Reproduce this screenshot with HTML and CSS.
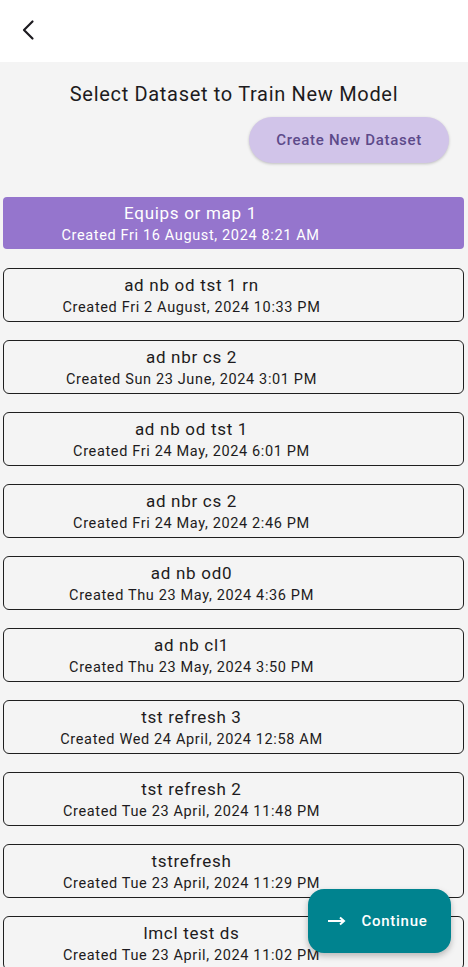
FILE: index.html
```html
<!DOCTYPE html>
<html>
<head>
<meta charset="utf-8">
<link rel="stylesheet" href="styles.css">
</head>
<body>
<header class="appbar">
  <button class="back" aria-label="Back">
    <svg width="24" height="24" viewBox="0 0 24 24"><path d="M16.5 3.5 L8 12 L16.5 20.5" fill="none" stroke="#1d1b20" stroke-width="2.2" stroke-linecap="round" stroke-linejoin="round"/></svg>
  </button>
</header>
<main class="content">
  <h1 class="title">Select Dataset to Train New Model</h1>
  <div class="actions"><button class="create">Create New Dataset</button></div>
  <ul class="list">
    <li class="card selected"><div class="card-body"><div class="name">Equips or map 1</div><div class="date">Created Fri 16 August, 2024 8:21 AM</div></div></li>
    <li class="card"><div class="card-body"><div class="name">ad nb od tst 1 rn</div><div class="date">Created Fri 2 August, 2024 10:33 PM</div></div></li>
    <li class="card"><div class="card-body"><div class="name">ad nbr cs 2</div><div class="date">Created Sun 23 June, 2024 3:01 PM</div></div></li>
    <li class="card"><div class="card-body"><div class="name">ad nb od tst 1</div><div class="date">Created Fri 24 May, 2024 6:01 PM</div></div></li>
    <li class="card"><div class="card-body"><div class="name">ad nbr cs 2</div><div class="date">Created Fri 24 May, 2024 2:46 PM</div></div></li>
    <li class="card"><div class="card-body"><div class="name">ad nb od0</div><div class="date">Created Thu 23 May, 2024 4:36 PM</div></div></li>
    <li class="card"><div class="card-body"><div class="name">ad nb cl1</div><div class="date">Created Thu 23 May, 2024 3:50 PM</div></div></li>
    <li class="card"><div class="card-body"><div class="name">tst refresh 3</div><div class="date">Created Wed 24 April, 2024 12:58 AM</div></div></li>
    <li class="card"><div class="card-body"><div class="name">tst refresh 2</div><div class="date">Created Tue 23 April, 2024 11:48 PM</div></div></li>
    <li class="card"><div class="card-body"><div class="name">tstrefresh</div><div class="date">Created Tue 23 April, 2024 11:29 PM</div></div></li>
    <li class="card"><div class="card-body"><div class="name">lmcl test ds</div><div class="date">Created Tue 23 April, 2024 11:02 PM</div></div></li>
  </ul>
</main>
<button class="fab">
  <svg width="20" height="20" viewBox="0 0 20 20"><path d="M1 10 H17 M13 6.5 L17 10 L13 13.5" fill="none" stroke="#fff" stroke-width="2"/></svg>
  <span>Continue</span>
</button>
</body>
</html>
```
FILE: styles.css
```css
* { box-sizing: border-box; }
html, body { margin: 0; padding: 0; }
body {
  width: 468px;
  height: 967px;
  overflow: hidden;
  background: #f4f4f4;
  font-family: Roboto, "Noto Sans", sans-serif;
  color: #1d1b20;
  position: relative;
}
.appbar {
  height: 62px;
  background: #ffffff;
  display: flex;
  align-items: center;
  padding-left: 16px;
}
.back {
  border: 0;
  background: none;
  padding: 0;
  width: 24px;
  height: 24px;
  display: flex;
  margin-top: -2px;
}
.content {
  padding: 19px 0 0;
}
.title {
  margin: 0;
  font-size: 20px;
  font-weight: 400;
  line-height: 26px;
  letter-spacing: 0.68px;
  text-align: center;
  color: #1d1b20;
}
.actions {
  display: flex;
  justify-content: flex-end;
  padding: 10px 19px 0 0;
}
.create {
  width: 200px;
  height: 46px;
  border: 0;
  border-radius: 23px;
  background: #d1c4e9;
  color: #5d4a8a;
  font-family: Roboto, sans-serif;
  font-size: 15px;
  font-weight: 500;
  letter-spacing: 0.7px;
  box-shadow: 0 1px 3px rgba(0,0,0,0.22);
}
.list {
  list-style: none;
  margin: 0;
  padding: 34px 4px 0 3px;
  display: flex;
  flex-direction: column;
  gap: 18px;
}
.card {
  flex: none;
  height: 54px;
  border: 1.3px solid #1f1f1f;
  border-radius: 6px;
  display: flex;
  align-items: center;
}
.card.selected {
  border: 0;
  background: #9575cd;
  color: #ffffff;
  height: 52px;
  border-radius: 4px;
  margin-bottom: 1px;
}
.card-body {
  width: 375px;
  text-align: center;
  display: flex;
  flex-direction: column;
  gap: 4px;
  padding-top: 3px;
}
.name {
  font-size: 17px;
  line-height: 19px;
  letter-spacing: 0.7px;
  color: inherit;
}
.date {
  font-size: 14.5px;
  line-height: 18px;
  letter-spacing: 0.64px;
}
.fab {
  position: absolute;
  left: 308px;
  top: 889px;
  width: 143px;
  height: 64px;
  border: 0;
  border-radius: 16px;
  background: #00838f;
  color: #ffffff;
  display: flex;
  align-items: center;
  justify-content: center;
  gap: 14px;
  font-family: Roboto, sans-serif;
  font-size: 15px;
  font-weight: 500;
  letter-spacing: 0.75px;
  box-shadow: 0 3px 6px rgba(0,0,0,0.25);
  padding: 0 4px 0 0;
}
.fab svg { display: block; }
```
